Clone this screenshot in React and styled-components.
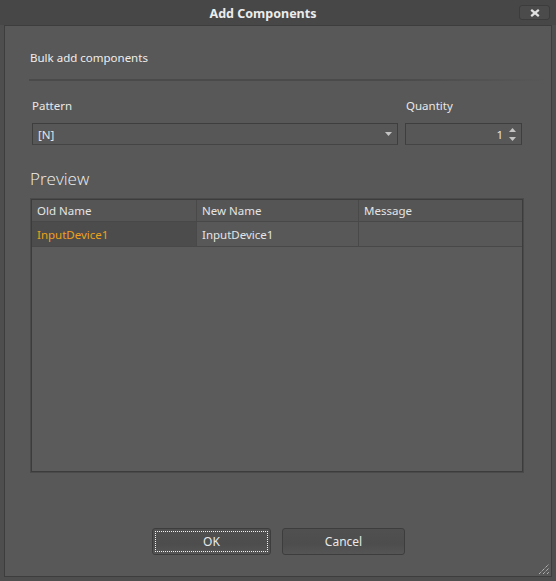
import React from "react";
import styled, { createGlobalStyle } from "styled-components";

const Global = createGlobalStyle`
  html, body { margin: 0; padding: 0; background: #4d4d4d; }
  body { font-family: "Noto Sans", "Open Sans", sans-serif; }
  * { box-sizing: border-box; }
`;

const Window = styled.div`
  width: 556px;
  height: 581px;
  display: flex;
  flex-direction: column;
  background: #4e4e4e;
  color: #e6e6e6;
  font-size: 11.5px;
`;

const TitleBar = styled.div`
  height: 25px;
  flex-shrink: 0;
  display: grid;
  grid-template-columns: 1fr auto 1fr;
  align-items: center;
  background: #474747;
`;

const Title = styled.div`
  grid-column: 2;
  font-weight: bold;
  font-size: 12.5px;
  color: #ececec;
  padding-top: 1px;
  margin-right: 30px;
`;

const CloseBtn = styled.div`
  grid-column: 3;
  justify-self: end;
  margin-right: 6px;
  width: 31px;
  height: 15px;
  border: 1px solid #3c3c3c;
  border-radius: 3px;
  background: #4b4b4b;
  display: flex;
  align-items: center;
  justify-content: center;
`;

const Frame = styled.div`
  flex: 1;
  display: flex;
  padding: 0 4px 4px 4px;
`;

const Content = styled.div`
  flex: 1;
  display: flex;
  flex-direction: column;
  border: 1px solid #3d3d3d;
  background: #585858;
  padding: 25px 27px 0 24px;
  position: relative;
`;

const Heading = styled.div`
  height: 14px;
  line-height: 14px;
  padding-left: 1px;
  color: #eeeeee;
`;

const Separator = styled.div`
  margin-top: 14px;
  height: 2px;
  margin-right: -25px;
  background: linear-gradient(to right, #4a4a4a 0%, #4a4a4a 70%, rgba(74,74,74,0) 100%);
`;

const FieldRow = styled.div`
  margin-top: 18px;
  display: grid;
  grid-template-columns: 366px 117px;
  column-gap: 7px;
  padding-left: 3px;
`;

const Field = styled.div`
  display: flex;
  flex-direction: column;
  gap: 10px;
`;

const Label = styled.div`
  height: 14px;
  line-height: 14px;
  padding-left: ${(p) => p.$indent || 0}px;
  color: #e8e8e8;
`;

const Box = styled.div`
  height: 22px;
  border: 1px solid #3e3e3e;
  border-bottom-color: #444;
  background: #575757;
  display: flex;
  align-items: center;
  padding: 0 3px 0 5px;
  color: #e6e6e6;
`;

const BoxText = styled.div`
  flex: 1;
  text-align: ${(p) => p.$align || "left"};
`;

const Spinner = styled.div`
  width: 11px;
  display: flex;
  flex-direction: column;
  align-items: center;
  gap: 5px;
  margin-left: 4px;
  padding-top: 1px;
`;

const PreviewTitle = styled.div`
  margin-top: 23px;
  font-size: 17px;
  font-weight: 300;
  color: #f0f0f0;
  font-family: "Open Sans", "Noto Sans", sans-serif;
  height: 22px;
  line-height: 22px;
  padding-left: 1px;
`;

const Table = styled.div`
  margin-top: 8px;
  height: 275px;
  flex-shrink: 0;
  margin-left: 1px;
  border: 1px solid #4a4a4a;
  display: flex;
`;

const TableInner = styled.div`
  flex: 1;
  border: 1px solid #3c3c3c;
  background: #5b5b5b;
  display: flex;
  flex-direction: column;
`;

const Row = styled.div`
  display: grid;
  grid-template-columns: 165px 162px 1fr;
  height: ${(p) => p.$h}px;
  border-bottom: 1px solid #484848;
`;

const Cell = styled.div`
  display: flex;
  align-items: center;
  padding-left: 5px;
  border-right: ${(p) => (p.$last ? "none" : "1px solid #494949")};
  background: ${(p) => p.$bg || "#585858"};
  color: ${(p) => p.$color || "#e4e4e4"};
`;

const Footer = styled.div`
  margin-top: auto;
  display: flex;
  gap: 11px;
  padding: 0 0 21px 123px;
`;

const Button = styled.div`
  width: ${(p) => p.$w}px;
  height: 27px;
  border: 1px solid #3d3d3d;
  border-radius: 3px;
  background: linear-gradient(to bottom, #505050 0%, #4d4d4d 60%, #555 100%);
  display: flex;
  align-items: center;
  justify-content: center;
  color: #e8e8e8;
  font-size: 12px;
  position: relative;
`;

const FocusRing = styled.div`
  position: absolute;
  inset: 2px;
  border: 1px dotted #f2f2f2;
`;

const Grip = styled.svg`
  position: absolute;
  right: 1px;
  bottom: 1px;
`;

const Arrow = ({ up }) => (
  <svg width="7" height="4" viewBox="0 0 7 4">
    <path d={up ? "M0 4 L3.5 0 L7 4 Z" : "M0 0 L7 0 L3.5 4 Z"} fill="#c4c4c4" />
  </svg>
);

export default function App() {
  return (
    <>
      <Global />
      <Window>
        <TitleBar>
          <Title>Add Components</Title>
          <CloseBtn>
            <svg width="10" height="8" viewBox="0 0 10 8">
              <path d="M1.2 0.8 L8.8 7.2 M8.8 0.8 L1.2 7.2" stroke="#e0e0e0" strokeWidth="2.2" />
            </svg>
          </CloseBtn>
        </TitleBar>
        <Frame>
          <Content>
            <Heading>Bulk add components</Heading>
            <Separator />
            <FieldRow>
              <Field>
                <Label $indent={0}>Pattern</Label>
                <Box>
                  <BoxText>[N]</BoxText>
                  <svg width="7" height="4" viewBox="0 0 7 4" style={{ marginRight: 2 }}>
                    <path d="M0 0 L7 0 L3.5 4 Z" fill="#c4c4c4" />
                  </svg>
                </Box>
              </Field>
              <Field>
                <Label $indent={1}>Quantity</Label>
                <Box>
                  <BoxText $align="right">1</BoxText>
                  <Spinner>
                    <Arrow up />
                    <Arrow />
                  </Spinner>
                </Box>
              </Field>
            </FieldRow>
            <PreviewTitle>Preview</PreviewTitle>
            <Table>
              <TableInner>
                <Row $h={22}>
                  <Cell $bg="#555555">Old Name</Cell>
                  <Cell $bg="#555555">New Name</Cell>
                  <Cell $bg="#555555" $last>Message</Cell>
                </Row>
                <Row $h={25}>
                  <Cell $bg="#4c4c4c" $color="#eda21a">InputDevice1</Cell>
                  <Cell>InputDevice1</Cell>
                  <Cell $last />
                </Row>
              </TableInner>
            </Table>
            <Footer>
              <Button $w={119}>
                <FocusRing />
                OK
              </Button>
              <Button $w={123}>Cancel</Button>
            </Footer>
            <Grip width="12" height="12" viewBox="0 0 12 12">
              <path d="M1 11 L11 1 M5 11 L11 5 M9 11 L11 9" stroke="#d8d8d8" strokeWidth="1" strokeDasharray="1 1" />
            </Grip>
          </Content>
        </Frame>
      </Window>
    </>
  );
}
